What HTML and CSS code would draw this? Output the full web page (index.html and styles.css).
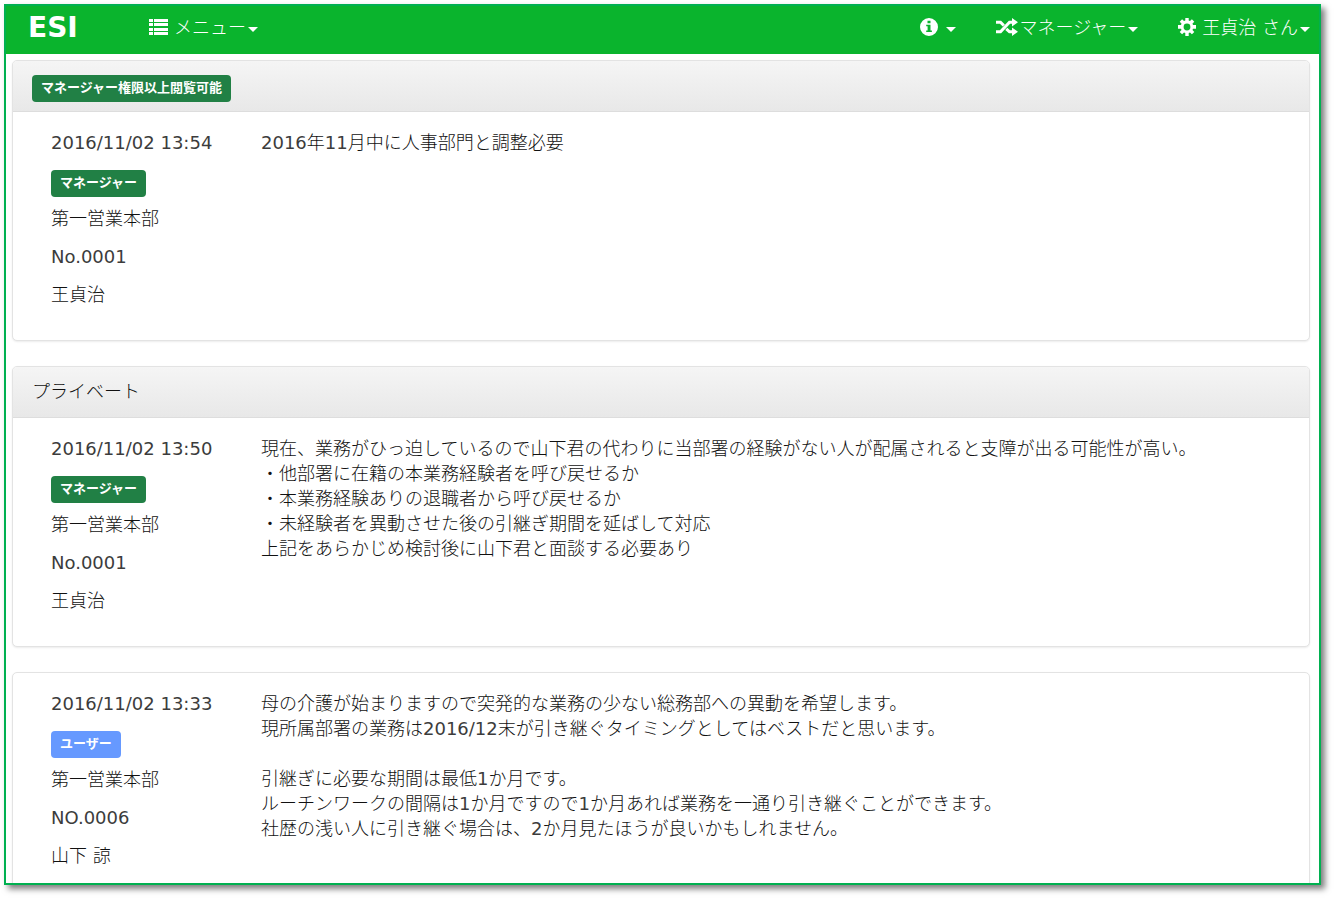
FILE: index.html
```html
<!DOCTYPE html>
<html lang="ja">
<head>
<meta charset="utf-8">
<meta name="viewport" content="width=device-width, initial-scale=1">
<title>ESI</title>
<link rel="stylesheet" href="styles.css">
</head>
<body>
<div class="window">
  <header class="navbar">
    <a class="brand" href="#">ESI</a>
    <button class="nav-item" type="button">
      <svg class="icon icon-list" width="19" height="18" viewBox="0 0 19 18" aria-hidden="true">
        <path d="M0 1h4v3H0zM5 1h14v3H5zM0 5h4v3H0zM5 5h14v3H5zM0 10h4v3H0zM5 10h14v3H5zM0 14h4v3H0zM5 14h14v3H5z"/>
      </svg>
      <span>メニュー</span><span class="caret"></span>
    </button>
    <nav class="nav-right">
      <button class="nav-item nav-info" type="button" aria-label="情報">
        <svg class="icon" width="18" height="18" viewBox="0 0 18 18" aria-hidden="true">
          <path fill-rule="evenodd" d="M9 0a9 9 0 1 0 0 18A9 9 0 0 0 9 0zM7.500 2.700h3v2.600h-3zM6.200 6.800h4.300v5.700h1.400V14H6.200v-1.500h1.400V8.300H6.200z"/>
        </svg>
        <span class="caret"></span>
      </button>
      <button class="nav-item nav-role" type="button">
        <svg class="icon" width="22" height="18" viewBox="0 0 22 18" aria-hidden="true">
          <path class="icon-stroke" d="M0 4.200H4.500L7.800 7.500M0 13.800H4.500L13.500 4.200H17M10.300 10.800L13.500 13.800H17"/>
          <path d="M16 0l6 4.200-6 4.200zM16 9.600l6 4.200-6 4.200z"/>
        </svg>
        <span>マネージャー</span><span class="caret"></span>
      </button>
      <button class="nav-item" type="button">
        <svg class="icon" width="18" height="18" viewBox="0 0 18 18" aria-hidden="true">
          <path fill-rule="evenodd" d="M7.300 0h3.400v2.600l1.300.5 1.900-1.800 2.400 2.400-1.800 1.900.5 1.300H18v3.900h-3l-.5 1.200 1.800 1.900-2.400 2.400-1.900-1.800-1.300.5V18H7.300v-3L6 14.500l-1.900 1.800-2.400-2.400L3.500 12 3 10.800H0V6.900h3l.5-1.300-1.800-1.900 2.400-2.400L6 3.100l1.300-.5zM9 5.600a3.400 3.400 0 1 0 0 6.800 3.400 3.400 0 0 0 0-6.800z"/>
        </svg>
        <span class="user-name">王貞治 さん</span><span class="caret"></span>
      </button>
    </nav>
  </header>

  <main class="content">
    <section class="panel">
      <header class="panel-header"><span class="badge badge-manager">マネージャー権限以上閲覧可能</span></header>
      <article class="entry">
        <div class="meta">
          <time class="num" datetime="2016-11-02T13:54">2016/11/02 13:54</time>
          <span class="badge badge-manager">マネージャー</span>
          <span>第一営業本部</span>
          <span class="num">No.0001</span>
          <span>王貞治</span>
        </div>
        <p class="message"><span class="num">2016</span>年<span class="num">11</span>月中に人事部門と調整必要</p>
      </article>
    </section>

    <section class="panel">
      <header class="panel-header"><h2 class="panel-title">プライベート</h2></header>
      <article class="entry">
        <div class="meta">
          <time class="num" datetime="2016-11-02T13:50">2016/11/02 13:50</time>
          <span class="badge badge-manager">マネージャー</span>
          <span>第一営業本部</span>
          <span class="num">No.0001</span>
          <span>王貞治</span>
        </div>
        <p class="message">現在、業務がひっ迫しているので山下君の代わりに当部署の経験がない人が配属されると支障が出る可能性が高い。<br>・他部署に在籍の本業務経験者を呼び戻せるか<br>・本業務経験ありの退職者から呼び戻せるか<br>・未経験者を異動させた後の引継ぎ期間を延ばして対応<br>上記をあらかじめ検討後に山下君と面談する必要あり</p>
      </article>
    </section>

    <section class="panel">
      <article class="entry">
        <div class="meta">
          <time class="num" datetime="2016-11-02T13:33">2016/11/02 13:33</time>
          <span class="badge badge-user">ユーザー</span>
          <span>第一営業本部</span>
          <span class="num">NO.0006</span>
          <span>山下 諒</span>
        </div>
        <p class="message">母の介護が始まりますので突発的な業務の少ない総務部への異動を希望します。<br>現所属部署の業務は<span class="num">2016/12</span>末が引き継ぐタイミングとしてはベストだと思います。<br><br>引継ぎに必要な期間は最低<span class="num">1</span>か月です。<br>ルーチンワークの間隔は<span class="num">1</span>か月ですので<span class="num">1</span>か月あれば業務を一通り引き継ぐことができます。<br>社歴の浅い人に引き継ぐ場合は、<span class="num">2</span>か月見たほうが良いかもしれません。</p>
      </article>
    </section>
  </main>
</div>
</body>
</html>
```
FILE: styles.css
```css
* {
  box-sizing: border-box;
}

body {
  margin: 0;
  height: 100vh;
  padding: 4px 13px 13px 4px;
  background: #fff;
  color: #111;
  font: 300 18px/25px "DejaVu Sans", "Noto Sans CJK JP", sans-serif;
}

.window {
  height: 100%;
  overflow: hidden;
  border: 2px solid #00b050;
  background: #fff;
  box-shadow: 4px 4px 6px rgba(0, 0, 0, 0.5);
}

.navbar {
  display: flex;
  align-items: center;
  height: 48px;
  padding: 0 9px 6px 22px;
  background: #0ab42d;
  color: #fff;
}

.brand {
  width: 121px;
  color: #fff;
  font-size: 28px;
  font-weight: 700;
  text-decoration: none;
}

.nav-item {
  display: flex;
  align-items: center;
  padding: 0;
  border: 0;
  background: none;
  color: inherit;
  font: inherit;
  white-space: nowrap;
  cursor: pointer;
}

.nav-right {
  display: flex;
  gap: 40px;
  margin-left: auto;
}

.icon {
  flex: none;
  fill: currentColor;
}

.icon-list {
  margin-right: 6px;
}

.icon-stroke {
  fill: none;
  stroke: currentColor;
  stroke-width: 3;
}

.nav-role {
  gap: 2px;
}

.nav-info {
  gap: 8px;
}

.user-name {
  margin-left: 6px;
}

.caret {
  margin: 4px 0 0 2px;
  border: 5px solid transparent;
  border-top-color: currentColor;
  border-bottom: 0;
}

.nav-info .caret,
.nav-role .caret {
  margin-left: 0;
}

.content {
  display: flex;
  flex-direction: column;
  gap: 25px;
  padding: 6px 9px 25px 6px;
}

.panel {
  flex: none;
  border: 1px solid #e3e3e3;
  border-radius: 5px;
  background: #fff;
  box-shadow: 0 1px 2px rgba(0, 0, 0, 0.08);
}

.panel-header {
  display: flex;
  align-items: flex-start;
  min-height: 51px;
  padding: 12px 19px;
  border-bottom: 1px solid #ddd;
  border-radius: 4px 4px 0 0;
  background: linear-gradient(#f5f5f5, #e8e8e8);
}

.panel-title {
  margin: 0;
  font: inherit;
}

.entry {
  display: grid;
  grid-template-columns: 210px 1fr;
  padding: 18px 38px 33px;
}

.meta {
  display: flex;
  flex-direction: column;
  align-items: flex-start;
  gap: 13px;
}

.num {
  color: #3c3c3c;
  font-weight: 400;
}

.message {
  margin: 0;
}

.badge {
  margin: 2px 0 -4px;
  padding: 2px 9px 6px;
  border-radius: 4px;
  color: #fff;
  font-family: "Noto Sans CJK JP", sans-serif;
  font-size: 13px;
  font-weight: 700;
  line-height: 19px;
}

.badge-manager {
  background: #218045;
}

.badge-user {
  background: #6699ff;
}
```
